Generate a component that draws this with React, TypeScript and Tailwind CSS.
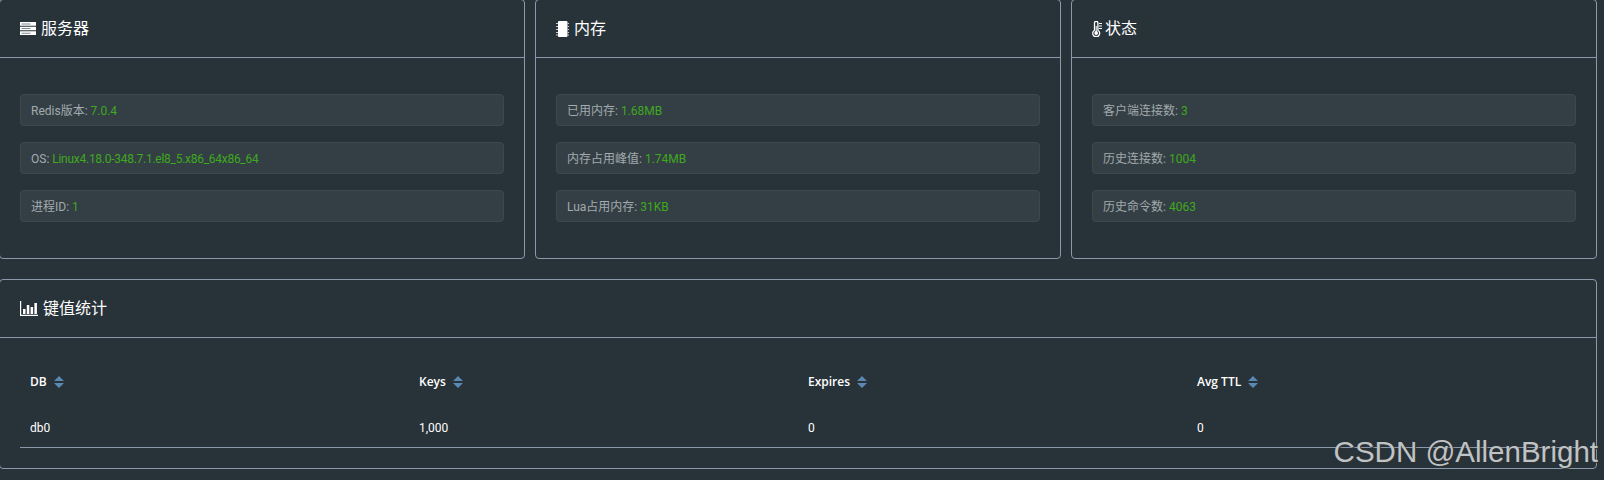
import { ReactNode } from "react";

const font = { fontFamily: 'Roboto, "Noto Sans CJK SC", sans-serif' };

function ServerIcon() {
  return (
    <svg width="16" height="13" viewBox="0 0 16 13" className="shrink-0">
      <path d="M0 0h16v3.670H0zM0 4.670h16v3.670H0zM0 9.330h16V13H0z" fill="#fff" />
      <path d="M1.500 1.500h9v1h-9zM1.500 6h9v1h-9zM1.500 10.700h9v1h-9z" fill="#7d8790" />
    </svg>
  );
}

function ChipIcon() {
  return (
    <svg width="13" height="16" viewBox="0 0 13 16" className="shrink-0">
      <rect x="2" y="0" width="9.500" height="16" rx="1" fill="#fff" />
      <path d="M0 2h2v1H0zM0 5h2v1H0zM0 8h2v1H0zM0 11h2v1H0zM0 13.500h2v1H0zM11.500 2h1.500v1h-1.500zM11.500 5h1.500v1h-1.500zM11.500 8h1.500v1h-1.500zM11.500 11h1.500v1h-1.500zM11.500 13.500h1.500v1h-1.500z" fill="#c4ccd2" />
    </svg>
  );
}

function ThermoIcon() {
  return (
    <svg width="10" height="16" viewBox="0 0 10 16" className="-mr-[2px] shrink-0">
      <path d="M2.500 2a1.700 1.700 0 0 1 3.400 0V9.200a3.500 3.500 0 1 1-3.400 0z" fill="#283239" stroke="#fff" strokeWidth="1.300" />
      <circle cx="4.200" cy="12" r="1.900" fill="#fff" />
      <path d="M3.700 5h1v6h-1zM7 2h3v1H7zM7 4.500h3v1H7zM7 7h3v1H7z" fill="#fff" />
    </svg>
  );
}

function BarsIcon() {
  return (
    <svg width="18" height="15" viewBox="0 0 18 15" className="shrink-0">
      <path d="M0 0h1.200v13.800H18V15H0z" fill="#fff" />
      <path d="M3 8h2.500v5H3zM6.800 4h2.500v9H6.800zM10.600 6h2.500v7h-2.500zM14.400 2h2.500v11h-2.500z" fill="#fff" />
    </svg>
  );
}

function Sorter() {
  return (
    <svg width="10" height="12" viewBox="0 0 10 12" className="ml-[7px] shrink-0">
      <path d="M5 0l5 5H0zM0 7h10l-5 5z" fill="#5b87b3" />
    </svg>
  );
}

function Stat({ label, value }: { label: string; value: string }) {
  // the long kernel string runs wider in Roboto than in the reference
  const long = value.length > 20;
  return (
    <div className="flex h-8 items-center whitespace-pre rounded border border-[#3e494f] bg-[#343f45] px-[10px] pt-px text-xs">
      <span className="text-[#a2aaae]">{label}: </span>
      <span className={long ? "tracking-[-0.27px] text-[#3fa91c]" : "text-[#3fa91c]"}>{value}</span>
    </div>
  );
}

function Card({ icon, title, children }: { icon: ReactNode; title: string; children: ReactNode }) {
  return (
    <section className="rounded border border-[#8a99ab]">
      <div className="flex h-[58px] items-center gap-[5px] border-b border-[#8a99ab] px-5 text-base text-white">
        {icon}
        <span>{title}</span>
      </div>
      {children}
    </section>
  );
}

function StatCard({ icon, title, stats }: { icon: ReactNode; title: string; stats: [string, string][] }) {
  return (
    <Card icon={icon} title={title}>
      <div className="flex flex-col gap-4 px-5 pt-9 pb-[36px]">
        {stats.map(([label, value]) => (
          <Stat key={label} label={label} value={value} />
        ))}
      </div>
    </Card>
  );
}

const columns = ["DB", "Keys", "Expires", "Avg TTL"];
const row = ["db0", "1,000", "0", "0"];

export default function App() {
  return (
    <div className="relative h-[480px] overflow-hidden bg-[#283239]" style={font}>
      <div className="-mt-px -ml-px flex flex-col gap-[20px] pr-[7px]">
        <div className="grid grid-cols-3 gap-[10px]">
          <StatCard
            icon={<ServerIcon />}
            title="服务器"
            stats={[
              ["Redis版本", "7.0.4"],
              ["OS", "Linux4.18.0-348.7.1.el8_5.x86_64x86_64"],
              ["进程ID", "1"],
            ]}
          />
          <StatCard
            icon={<ChipIcon />}
            title="内存"
            stats={[
              ["已用内存", "1.68MB"],
              ["内存占用峰值", "1.74MB"],
              ["Lua占用内存", "31KB"],
            ]}
          />
          <StatCard
            icon={<ThermoIcon />}
            title="状态"
            stats={[
              ["客户端连接数", "3"],
              ["历史连接数", "1004"],
              ["历史命令数", "4063"],
            ]}
          />
        </div>
        <Card icon={<BarsIcon />} title="键值统计">
          <div className="px-5 pt-[21px] pb-[20px] text-xs text-white">
            <div className="grid h-[46px] grid-cols-4 items-center font-semibold [font-family:'Open_Sans',sans-serif]">
              {columns.map((c) => (
                <div key={c} className="flex items-center pl-[10px]">
                  {c}
                  <Sorter />
                </div>
              ))}
            </div>
            <div className="grid h-[43px] grid-cols-4 items-center border-b border-[#8a99ab] pt-[4px]">
              {row.map((c, i) => (
                <div key={i} className="pl-[10px]">
                  {c}
                </div>
              ))}
            </div>
          </div>
        </Card>
      </div>
      <div
        className="absolute right-[6px] bottom-[14px] text-[29.500px] leading-none text-[#bfc3c5]"
        style={{ fontFamily: '"Liberation Sans", sans-serif', textShadow: "1px 1px 1px #333" }}
      >
        CSDN @AllenBright
      </div>
    </div>
  );
}
